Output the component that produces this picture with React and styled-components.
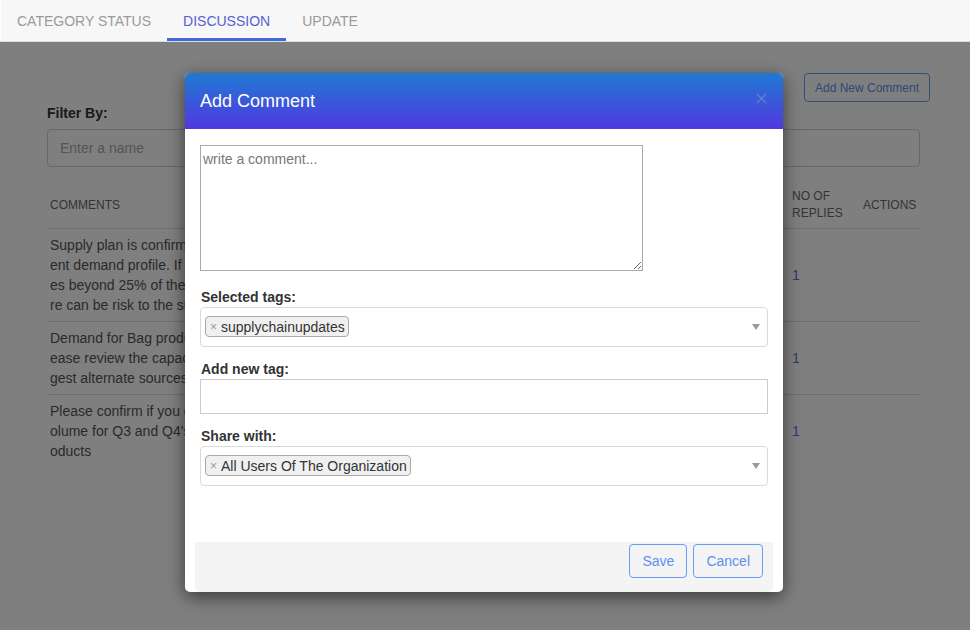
import React from "react";
import styled, { createGlobalStyle } from "styled-components";

const GlobalStyle = createGlobalStyle`
  html, body {
    margin: 0;
    padding: 0;
    background: #fff;
    font-family: "Liberation Sans", Arial, sans-serif;
    font-size: 14px;
    color: #333;
  }
  * { box-sizing: border-box; }
`;

const Page = styled.div`
  width: 970px;
  min-height: 100vh;
  display: flex;
  flex-direction: column;
`;

const TabBar = styled.div`
  display: flex;
  height: 42px;
  background: #f7f7f7;
  border-bottom: 1px solid #dcdcdc;
  border-left: 1px solid #fdfdfd;
`;

const Tab = styled.div`
  padding: 3px 16px 0;
  display: flex;
  align-items: center;
  font-size: 14px;
  text-transform: uppercase;
  color: ${(p) => (p.$active ? "#5560d6" : "#9a9a9a")};
  border-bottom: 3px solid ${(p) => (p.$active ? "#3d6cd8" : "transparent")};
`;

const Content = styled.div`
  position: relative;
  flex: 1;
  padding: 31px 50px 0 47px;
`;

const ActionRow = styled.div`
  display: flex;
  justify-content: flex-end;
  margin-right: -10px;
`;

const OutlineButton = styled.button`
  font-family: "Liberation Sans", Arial, sans-serif;
  font-size: ${(p) => (p.$small ? "12px" : "14px")};
  height: ${(p) => (p.$small ? "29px" : "34px")};
  padding: 0 ${(p) => (p.$small ? "10px" : "12px")};
  color: #5f8ff0;
  background: transparent;
  border: 1px solid #6a9cf7;
  border-radius: 4px;
`;

const FilterLabel = styled.div`
  margin-top: 3px;
  font-weight: bold;
  line-height: 16px;
  color: #333;
`;

const FilterInput = styled.input`
  display: block;
  width: 100%;
  height: 38px;
  margin-top: 8px;
  padding: 0 12px;
  font-family: "Liberation Sans", Arial, sans-serif;
  font-size: 14px;
  border: 1px solid #d0d0d0;
  border-radius: 4px;
  &::placeholder { color: #aaa; }
`;

const Table = styled.div`
  margin-top: 15px;
`;

const Row = styled.div`
  display: grid;
  grid-template-columns: 1fr 71px 60px;
  align-items: center;
  border-bottom: ${(p) => (p.$last ? "none" : "1px solid #ddd")};
`;

const HeadCell = styled.div`
  padding: 6px 3px;
  font-size: 12px;
  line-height: 17px;
  text-transform: uppercase;
  color: #6a6a6a;
`;

const Cell = styled.div`
  padding: 6px 3px;
  line-height: 20px;
  color: #555;
  overflow: hidden;
`;

const Line = styled.span`
  display: block;
  white-space: nowrap;
`;

const ReplyCount = styled.span`
  color: #5878d8;
`;

const Overlay = styled.div`
  position: absolute;
  inset: 0;
  background: rgba(0, 0, 0, 0.5);
  padding: 31px 2px 0 0;
`;

const Modal = styled.div`
  width: 598px;
  margin: 0 auto;
  background: #fff;
  border-radius: 5px;
  box-shadow: 0 5px 18px rgba(0, 0, 0, 0.55);
`;

const ModalHeader = styled.div`
  height: 56px;
  padding: 0 15px;
  display: flex;
  align-items: center;
  justify-content: space-between;
  border-radius: 5px 5px 0 0;
  background: linear-gradient(to bottom, #2179d3, #5039e0);
`;

const ModalTitle = styled.div`
  font-size: 18px;
  color: #fff;
  padding-top: 1px;
`;

const CloseButton = styled.span`
  display: flex;
  margin-right: 1px;
  margin-top: -6px;
`;

const ModalBody = styled.div`
  padding: 16px 15px 56px;
`;

const CommentArea = styled.textarea`
  display: block;
  width: 443px;
  height: 126px;
  padding: 4px 2px;
  font-family: "Liberation Sans", Arial, sans-serif;
  font-size: 14px;
  line-height: 18px;
  border: 1px solid #a9a9a9;
  resize: vertical;
  &::placeholder { color: #777; }
`;

const Field = styled.div`
  margin-top: ${(p) => p.$top}px;
`;

const FieldLabel = styled.label`
  display: block;
  font-weight: bold;
  line-height: 16px;
  margin-bottom: 2px;
  padding-left: 1px;
  color: #333;
`;

const SelectBox = styled.div`
  height: 40px;
  display: flex;
  align-items: center;
  padding: 0 7px 0 4px;
  border: 1px solid #dadada;
  border-radius: 4px;
`;

const Chip = styled.span`
  display: inline-flex;
  align-items: center;
  height: 21px;
  margin-top: -1px;
  padding: 0 3px 0 4px;
  background: #f0f0f0;
  border: 1px solid #aaa;
  border-radius: 4px;
  color: #333;
  font-size: 14px;
`;

const ChipRemove = styled.span`
  color: #999;
  font-size: 12px;
  margin-right: 4px;
`;

const Arrow = styled.span`
  margin-left: auto;
  width: 0;
  height: 0;
  border-left: 4px solid transparent;
  border-right: 4px solid transparent;
  border-top: 6px solid #999;
`;

const TextInput = styled.input`
  display: block;
  width: 100%;
  height: 35px;
  border: 1px solid #ccc;
  font-family: "Liberation Sans", Arial, sans-serif;
  font-size: 14px;
`;

const ModalFooter = styled.div`
  margin: 0 10px;
  padding: 2px 10px 14px 0;
  display: flex;
  justify-content: flex-end;
  gap: 6px;
  background: #f4f4f4;
  border-radius: 0 0 5px 5px;
`;

const comments = [
  [
    "Supply plan is confirmed as per the curr",
    "ent demand profile. If the demand increas",
    "es beyond 25% of the current forecast the",
    "re can be risk to the supply plan.",
  ],
  [
    "Demand for Bag products is going up. Pl",
    "ease review the capacity plans and sug",
    "gest alternate sources if needed.",
  ],
  [
    "Please confirm if you can support the v",
    "olume for Q3 and Q4's new launch pr",
    "oducts",
  ],
];

const Select = ({ value }) => (
  <SelectBox>
    <Chip>
      <ChipRemove>×</ChipRemove>
      {value}
    </Chip>
    <Arrow />
  </SelectBox>
);

const App = () => {
  return (
    <Page>
      <GlobalStyle />
      <TabBar>
        <Tab>Category Status</Tab>
        <Tab $active>Discussion</Tab>
        <Tab>Update</Tab>
      </TabBar>
      <Content>
        <ActionRow>
          <OutlineButton $small>Add New Comment</OutlineButton>
        </ActionRow>
        <FilterLabel>Filter By:</FilterLabel>
        <FilterInput placeholder="Enter a name" />
        <Table>
          <Row>
            <HeadCell>Comments</HeadCell>
            <HeadCell>No of replies</HeadCell>
            <HeadCell>Actions</HeadCell>
          </Row>
          {comments.map((lines, i) => (
            <Row key={i} $last={i === comments.length - 1}>
              <Cell>
                {lines.map((l) => (
                  <Line key={l}>{l}</Line>
                ))}
              </Cell>
              <Cell>
                <ReplyCount>1</ReplyCount>
              </Cell>
              <Cell />
            </Row>
          ))}
        </Table>
        <Overlay>
          <Modal>
            <ModalHeader>
              <ModalTitle>Add Comment</ModalTitle>
              <CloseButton>
                <svg width="11" height="11" viewBox="0 0 11 11">
                  <path d="M1 1L10 10M10 1L1 10" stroke="#637ccc" strokeWidth="1.5" fill="none" />
                </svg>
              </CloseButton>
            </ModalHeader>
            <ModalBody>
              <CommentArea placeholder="write a comment..." />
              <Field $top={18}>
                <FieldLabel>Selected tags:</FieldLabel>
                <Select value="supplychainupdates" />
              </Field>
              <Field $top={14}>
                <FieldLabel>Add new tag:</FieldLabel>
                <TextInput />
              </Field>
              <Field $top={14}>
                <FieldLabel>Share with:</FieldLabel>
                <Select value="All Users Of The Organization" />
              </Field>
            </ModalBody>
            <ModalFooter>
              <OutlineButton>Save</OutlineButton>
              <OutlineButton>Cancel</OutlineButton>
            </ModalFooter>
          </Modal>
        </Overlay>
      </Content>
    </Page>
  );
};

export default App;
